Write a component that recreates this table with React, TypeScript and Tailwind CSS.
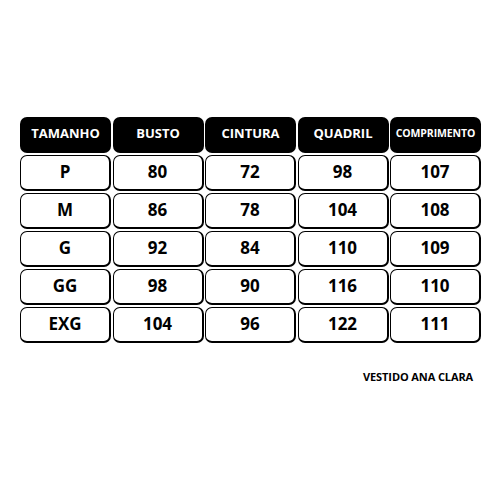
import React from "react";

const headers = ["TAMANHO", "BUSTO", "CINTURA", "QUADRIL", "COMPRIMENTO"];
const rows = [
  ["P", "80", "72", "98", "107"],
  ["M", "86", "78", "104", "108"],
  ["G", "92", "84", "110", "109"],
  ["GG", "98", "90", "116", "110"],
  ["EXG", "104", "96", "122", "111"],
];

export default function App() {
  return (
    <div
      className="w-[500px] h-[500px] bg-white flex flex-col"
      style={{ fontFamily: '"Open Sans", "Liberation Sans", sans-serif' }}
    >
      <div className="ml-[20px] mt-[117px] w-[461px] grid grid-cols-5 gap-x-[1.5px] gap-y-[2px]">
        {headers.map((h) => (
          <div
            key={h}
            className="h-[36px] bg-black rounded-[7px] flex items-center justify-center pb-[3px]"
          >
            <span
              className={
                h === "COMPRIMENTO"
                  ? "text-white font-bold text-[10.5px] tracking-[-0.1px]"
                  : "text-white font-bold text-[13px]"
              }
            >
              {h}
            </span>
          </div>
        ))}
        {rows.map((r) =>
          r.map((c, i) => (
            <div
              key={r[0] + i}
              className="h-[36px] bg-white rounded-[7px] border border-black border-r-2 border-b-2 flex items-center justify-center pb-[2px]"
            >
              <span className="text-black font-bold text-[17px]">{c}</span>
            </div>
          ))
        )}
      </div>
      <div className="mt-[26px] ml-[363px] text-[11px] font-bold text-black tracking-[-0.1px]">
        VESTIDO ANA CLARA
      </div>
    </div>
  );
}
